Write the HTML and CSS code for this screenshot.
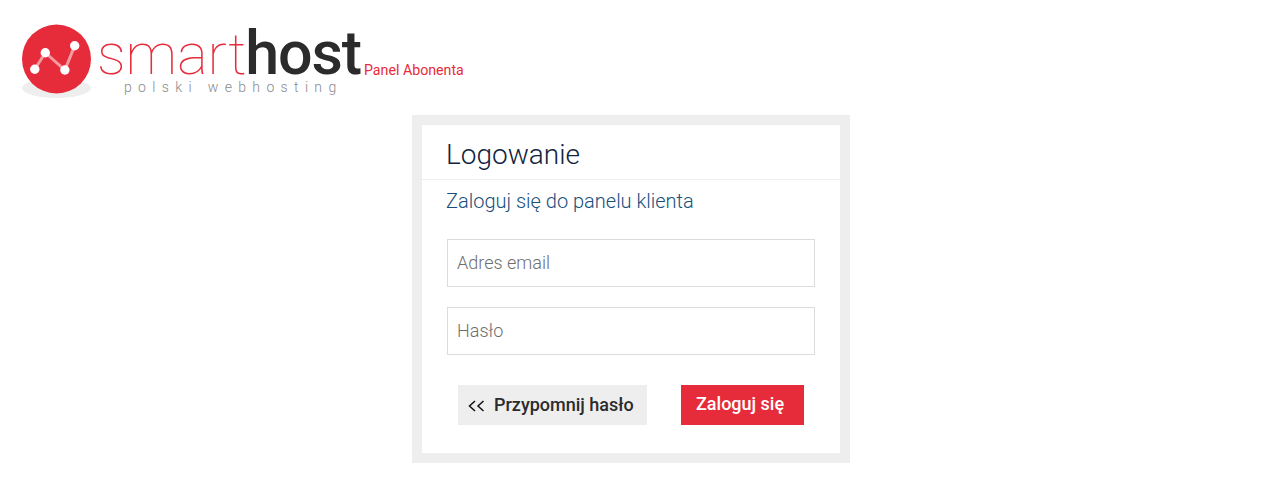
FILE: index.html
```html
<!doctype html>
<html>
<head>
  <link rel="stylesheet" href="styles.css">
</head>
<body>
  <header class="top">
    <svg class="logo-mark" width="70" height="74" viewBox="0 0 70 74">
      <ellipse cx="34.5" cy="64" rx="34.5" ry="10" fill="#eeeeee"/>
      <circle cx="34.5" cy="35" r="34.5" fill="#e62c3b"/>
      <polyline points="12.8,45.3 23.3,28.7 42.9,46 52.7,21.7" fill="none" stroke="#f59aa1" stroke-width="3"/>
      <circle cx="12.8" cy="45.3" r="4.7" fill="#fff"/>
      <circle cx="23.3" cy="28.7" r="4.7" fill="#fff"/>
      <circle cx="42.9" cy="46" r="4.7" fill="#fff"/>
      <circle cx="52.7" cy="21.7" r="4.7" fill="#fff"/>
    </svg>
    <div class="logo-text">
      <div class="logo-name"><span class="smart">smart</span><span class="host">host</span></div>
      <div class="logo-sub">polski webhosting</div>
    </div>
    <a class="panel-link" href="#">Panel Abonenta</a>
  </header>

  <div class="login-box">
    <h1>Logowanie</h1>
    <div class="login-body">
      <p class="lead">Zaloguj się do panelu klienta</p>
      <input class="field" type="text" placeholder="Adres email">
      <input class="field" type="password" placeholder="Hasło">
      <div class="actions">
        <a class="btn btn-back" href="#">
          <svg class="arrows" width="17" height="12" viewBox="0 0 17 12">
            <path d="M7 1 L1.5 6 L7 11 M15.5 1 L10 6 L15.5 11" fill="none" stroke="#111" stroke-width="1.5"/>
          </svg>
          Przypomnij hasło
        </a>
        <a class="btn btn-login" href="#">Zaloguj się</a>
      </div>
    </div>
  </div>
</body>
</html>
```

FILE: styles.css
```css
* {
  margin: 0;
  padding: 0;
  box-sizing: border-box;
  font-family: Roboto, sans-serif;
}

body {
  background: #fff;
}

.top {
  display: flex;
  align-items: flex-start;
  height: 115px;
  padding: 24px 0 0 22px;
}

.logo-mark {
  flex: none;
}

.logo-text {
  margin-left: 5px;
  width: 267px;
}

.logo-name {
  height: 55px;
  line-height: 58px;
  white-space: nowrap;
}

.smart {
  font-size: 57.5px;
  font-weight: 100;
  color: #e62c3b;
}

.host {
  margin-left: -1px;
  font-size: 61px;
  font-weight: 500;
  letter-spacing: -1.2px;
  color: #2b2b2b;
}

.logo-sub {
  margin-left: 27px;
  font-size: 14px;
  font-weight: 300;
  line-height: 16px;
  letter-spacing: 6.35px;
  color: #8a8a8a;
  white-space: nowrap;
}

.panel-link {
  margin-top: 37px;
  font-size: 14.2px;
  line-height: 18px;
  color: #e62c3b;
  text-decoration: none;
}

.login-box {
  width: 438px;
  height: 348px;
  margin-left: 412px;
  border: 10px solid #eeeeee;
}

h1 {
  height: 55px;
  padding: 13px 0 0 24px;
  font-size: 28px;
  font-weight: 300;
  line-height: 34px;
  color: #12233f;
  border-bottom: 1px solid #eeeeee;
}

.login-body {
  padding: 0 25px;
}

.lead {
  margin: 9px 0 26px -1px;
  font-size: 20px;
  font-weight: 300;
  line-height: 24px;
  color: #164f7c;
}

.field {
  display: block;
  width: 368px;
  height: 48px;
  margin-bottom: 20px;
  padding: 0 9px 2px;
  border: 1px solid #dcdcdc;
  outline: none;
  background: #fff;
  font-size: 18px;
  font-weight: 300;
}

.field::placeholder {
  color: #6f6f6f;
  opacity: 1;
}

.actions {
  display: flex;
  justify-content: space-between;
  margin-top: 30px;
  padding: 0 11px;
}

.btn {
  display: block;
  height: 40px;
  font-size: 18px;
  font-weight: 500;
  line-height: 38px;
  text-decoration: none;
  white-space: nowrap;
}

.btn-back {
  display: flex;
  align-items: center;
  width: 189px;
  padding: 0 0 1px 10px;
  background: #eeeeee;
  color: #2b2b2b;
}

.arrows {
  flex: none;
  margin: 3px 9px 0 0;
}

.btn-login {
  width: 123px;
  padding-left: 15px;
  background: #e62c3b;
  color: #fff;
}
```
